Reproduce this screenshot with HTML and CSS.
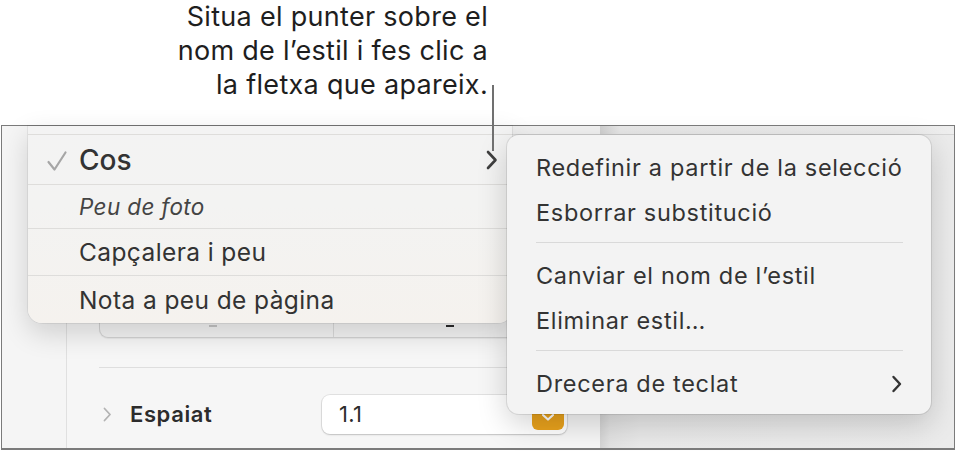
FILE: index.html
```html
<!DOCTYPE html>
<html lang="ca">
<head>
<meta charset="utf-8">
<title>Estils</title>
<link rel="stylesheet" href="styles.css">
</head>
<body>
<div class="stage">
  <div class="callout">
    <p class="callout-text">Situa el punter sobre el<br>nom de l’estil i fes clic a<br>la fletxa que apareix.</p>
  </div>

  <div class="window">
    <div class="gutter"></div>
    <div class="inspector">
      <div class="inspector-band"></div>
      <div class="segment">
        <div class="seg-cell"><span class="seg-mark light"></span></div>
        <div class="seg-cell"><span class="seg-mark dark"></span></div>
      </div>
      <div class="rule"></div>
      <div class="prop-row">
        <svg class="disclosure" width="9" height="15" viewBox="0 0 9 15"><path d="M1.5 1.5 L7 7.5 L1.5 13.5" fill="none" stroke="#b3b3b3" stroke-width="1.8" stroke-linecap="round" stroke-linejoin="round"/></svg>
        <span class="prop-label">Espaiat</span>
        <div class="field">
          <span class="field-value">1.1</span>
          <span class="field-btn">
            <svg width="14" height="9" viewBox="0 0 14 9"><path d="M2 2 L7 6.5 L12 2" fill="none" stroke="#fff" stroke-width="2.2" stroke-linecap="round" stroke-linejoin="round"/></svg>
          </span>
        </div>
      </div>
    </div>
    <div class="canvas">
      <div class="canvas-band"></div>
    </div>
  </div>

  <div class="style-menu">
    <div class="sm-row sm-stub"></div>
    <div class="sm-row sm-current">
      <svg class="check" width="22" height="24" viewBox="0 0 22 24"><path d="M2.5 13 L8.5 20.5 L19.5 3.5" fill="none" stroke="#a6a6a6" stroke-width="2.2" stroke-linecap="round" stroke-linejoin="round"/></svg>
      <span class="sm-label sm-label-big">Cos</span>
      <svg class="sm-arrow" width="12" height="20" viewBox="0 0 12 20"><path d="M2 2 L9.5 10 L2 18" fill="none" stroke="#3f3f3f" stroke-width="2.6" stroke-linecap="round" stroke-linejoin="round"/></svg>
    </div>
    <div class="sm-row sm-caption"><span class="sm-label sm-italic">Peu de foto</span></div>
    <div class="sm-row sm-head"><span class="sm-label">Capçalera i peu</span></div>
    <div class="sm-row sm-foot"><span class="sm-label">Nota a peu de pàgina</span></div>
  </div>

  <div class="context-menu">
    <div class="cm-item">Redefinir a partir de la selecció</div>
    <div class="cm-item">Esborrar substitució</div>
    <div class="cm-sep"></div>
    <div class="cm-item">Canviar el nom de l’estil</div>
    <div class="cm-item">Eliminar estil…</div>
    <div class="cm-sep"></div>
    <div class="cm-item cm-sub">
      <span>Drecera de teclat</span>
      <svg width="12" height="18" viewBox="0 0 12 18"><path d="M2.5 2 L9 9 L2.5 16" fill="none" stroke="#333" stroke-width="2.4" stroke-linecap="round" stroke-linejoin="round"/></svg>
    </div>
  </div>

  <div class="leader"></div>
</div>
</body>
</html>
```

FILE: styles.css
```css
* { box-sizing: border-box; }

html, body {
  margin: 0;
  padding: 0;
  background: #ffffff;
}

body {
  font-family: "Inter", "Roboto", "Noto Sans", sans-serif;
  color: #333333;
}

.stage {
  position: relative;
  width: 956px;
  height: 451px;
  overflow: hidden;
}

/* ---------- callout ---------- */
.callout {
  height: 125px;
  width: 488px;
}

.callout-text {
  margin: 0;
  text-align: right;
  font-size: 27px;
  line-height: 34px;
  color: #1e1e1e;
  letter-spacing: 0.3px;
  white-space: nowrap;
}

.leader {
  position: absolute;
  left: 492px;
  top: 85px;
  width: 2px;
  height: 66px;
  background: #707070;
}

/* ---------- window frame ---------- */
.window {
  margin-left: 1px;
  width: 954px;
  height: 325px;
  border: 1px solid #7b7b7b;
  border-bottom-width: 2px;
  display: flex;
  background: #f4f4f4;
}

.gutter {
  width: 64px;
  flex: none;
  background: #f5f5f5;
}

.inspector {
  width: 534px;
  flex: none;
  background: #f6f6f6;
  border-left: 1px solid #e0e0e0;
  padding: 0 0 0 32px;
  display: flex;
  flex-direction: column;
}

.inspector-band {
  height: 9px;
  margin-left: -32px;
  border-bottom: 1px solid #dddddd;
  background: #f1f1f1;
}

.segment {
  margin-top: 165px;
  width: 468px;
  height: 38px;
  display: flex;
  background: #f3f3f3;
  border: 1px solid #d3d3d3;
  border-top: none;
  border-radius: 0 0 9px 9px;
  box-shadow: 0 1px 1px rgba(0,0,0,0.06);
}

.seg-cell {
  flex: 1;
  display: flex;
  align-items: flex-end;
  justify-content: center;
  padding-bottom: 10px;
}

.seg-cell + .seg-cell {
  border-left: 1px solid #dadada;
}

.seg-mark {
  width: 8px;
  height: 2px;
  display: block;
}

.seg-mark.light { background: #c4c4c4; margin-left: -6px; }
.seg-mark.dark { background: #2a2a2a; margin-left: 0; }

.rule {
  margin-top: 29px;
  height: 1px;
  background: #dedede;
}

.prop-row {
  margin-top: 26px;
  display: flex;
  align-items: center;
  height: 40px;
}

.disclosure {
  margin-left: 4px;
  flex: none;
}

.prop-label {
  margin-left: 18px;
  font-size: 22px;
  font-weight: 600;
  letter-spacing: 0.6px;
  color: #2c2c2c;
  width: 192px;
}

.field {
  position: relative;
  width: 245px;
  height: 39px;
  background: #ffffff;
  border-radius: 8px;
  box-shadow: 0 0 0 1px rgba(0,0,0,0.08), 0 1px 2px rgba(0,0,0,0.15);
  display: flex;
  align-items: center;
  justify-content: space-between;
  padding: 0 3px 0 17px;
}

.field-value {
  font-size: 22px;
  letter-spacing: 0.3px;
  color: #2c2c2c;
}

.field-btn {
  width: 32px;
  height: 26px;
  margin-top: 6px;
  background: #e9a21c;
  border-radius: 6px;
  display: flex;
  align-items: center;
  justify-content: center;
}

.canvas {
  flex: 1;
  background: linear-gradient(to right, #d4d4d4 0px, #e2e2e2 10px, #e9e9e9 40px, #ebebeb 100%);
}

.canvas-band {
  height: 9px;
  border-bottom: 1px solid #d6d6d6;
  background: linear-gradient(to right, #cfcfcf 0px, #e8e8e8 20px, #eeeeee 100%);
}

/* ---------- style list popup ---------- */
.style-menu {
  position: absolute;
  left: 28px;
  top: 126px;
  width: 484px;
  background: linear-gradient(to bottom, #f3f3f3 0%, #f3f3f2 40%, #f5f2ee 100%);
  border-radius: 0 0 14px 14px;
  box-shadow: 0 10px 28px rgba(0,0,0,0.16), 0 0 0 1px rgba(0,0,0,0.06);
  overflow: hidden;
}

.sm-row {
  display: flex;
  align-items: center;
  padding-left: 51px;
  border-bottom: 1px solid #dedddb;
  position: relative;
  white-space: nowrap;
}

.sm-row:last-child { border-bottom: none; }

.sm-stub { height: 9px; }
.sm-current { height: 50px; }
.sm-caption { height: 44px; }
.sm-head { height: 47px; }
.sm-foot { height: 47px; }

.check {
  position: absolute;
  left: 18px;
  top: 14px;
}

.sm-label {
  font-size: 24.5px;
  color: #333333;
  letter-spacing: 0.4px;
}

.sm-label-big {
  font-size: 28px;
  font-weight: 500;
  letter-spacing: 0;
}

.sm-italic {
  font-style: italic;
  font-size: 22.5px;
  letter-spacing: 0.35px;
  color: #444444;
}

.sm-arrow {
  position: absolute;
  left: 458px;
  top: 15px;
}

/* ---------- context menu ---------- */
.context-menu {
  position: absolute;
  left: 507px;
  top: 135px;
  width: 424px;
  padding: 10px 28px 8px 29px;
  background: #f3f3f3;
  border-radius: 12px;
  box-shadow: 0 0 0 1px rgba(0,0,0,0.09), 0 10px 30px rgba(0,0,0,0.18);
}

.cm-item {
  height: 45px;
  display: flex;
  align-items: center;
  font-size: 23.5px;
  color: #333333;
  letter-spacing: 0.68px;
  white-space: nowrap;
}

.cm-sub {
  justify-content: space-between;
}

.cm-sep {
  height: 18px;
  display: flex;
  align-items: center;
}

.cm-sep::before {
  content: "";
  display: block;
  width: 100%;
  height: 1px;
  background: #d9d9d9;
  margin-top: -3px;
}
```
